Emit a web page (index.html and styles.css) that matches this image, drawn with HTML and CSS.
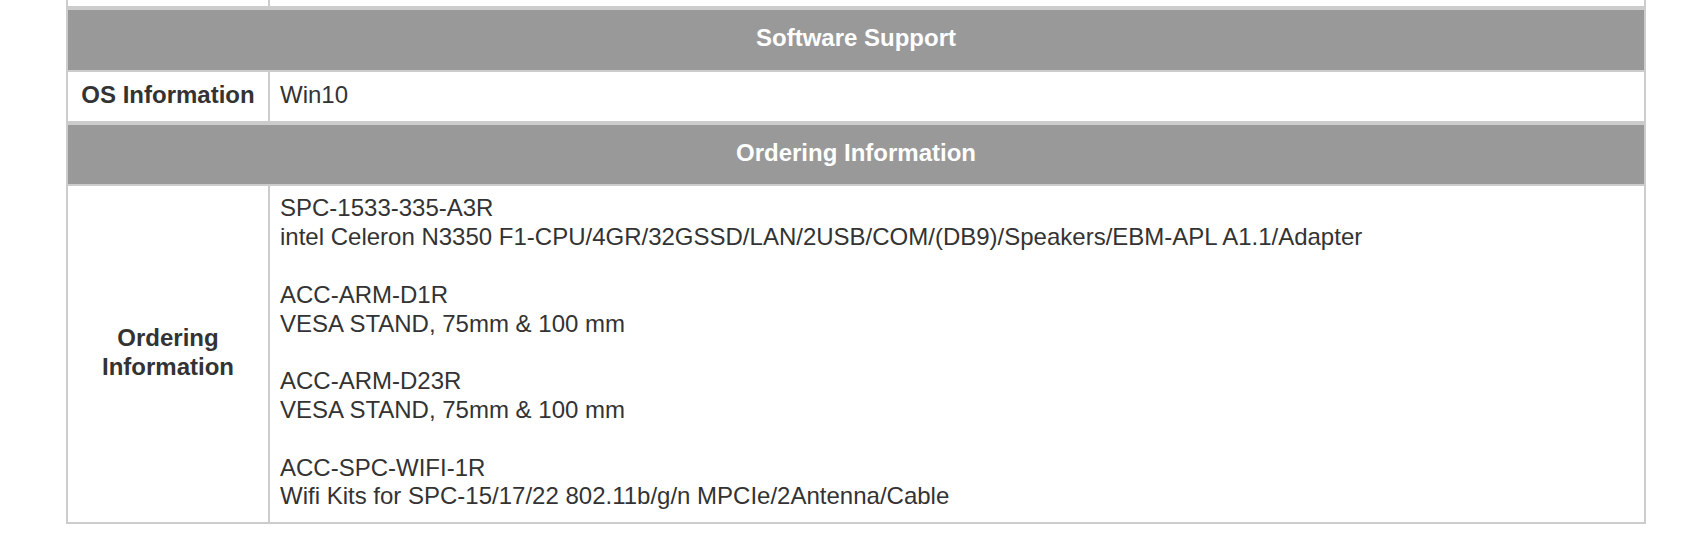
FILE: index.html
```html
<!DOCTYPE html>
<html>
<head>
<meta charset="utf-8">
<link rel="stylesheet" href="styles.css">
</head>
<body>
<table class="spec">
  <tr class="prev">
    <td class="label"></td>
    <td class="value"></td>
  </tr>
  <tr>
    <th class="section" colspan="2">Software Support</th>
  </tr>
  <tr>
    <td class="label">OS Information</td>
    <td class="value">Win10</td>
  </tr>
  <tr>
    <th class="section" colspan="2">Ordering Information</th>
  </tr>
  <tr>
    <td class="label">Ordering Information</td>
    <td class="value order">SPC-1533-335-A3R<br>intel Celeron N3350 F1-CPU/4GR/32GSSD/LAN/2USB/COM/(DB9)/Speakers/EBM-APL A1.1/Adapter<br><br>ACC-ARM-D1R<br>VESA STAND, 75mm &amp; 100 mm<br><br>ACC-ARM-D23R<br>VESA STAND, 75mm &amp; 100 mm<br><br>ACC-SPC-WIFI-1R<br>Wifi Kits for SPC-15/17/22 802.11b/g/n MPCIe/2Antenna/Cable</td>
  </tr>
</table>
</body>
</html>
```

FILE: styles.css
```css
html, body {
  margin: 0;
  padding: 0;
  background: #fff;
}

.spec {
  margin-left: 66px;
  width: 1580px;
  border-collapse: separate;
  border-spacing: 0;
  border: 1px solid #cccccc;
  border-top: 0;
  font-family: "Liberation Sans", Arial, Helvetica, sans-serif;
  font-size: 24px;
  line-height: 28.8px;
  color: #333333;
  table-layout: fixed;
}

.spec td,
.spec th {
  border: 1px solid #cccccc;
  padding: 9px 10px 11px;
}

.spec .label {
  width: 180px;
  font-weight: bold;
  text-align: center;
  vertical-align: middle;
}

.spec .value {
  text-align: left;
  vertical-align: top;
}

.spec .prev td {
  border-top: 0;
  padding: 0;
  height: 6px;
  line-height: 6px;
}

.spec .prev .label {
  width: 200px;
}

.spec .section {
  background: #999999;
  color: #ffffff;
  font-weight: bold;
  text-align: center;
  border-top-width: 3px;
  padding: 14px 10px 17px;
}

.spec .order {
  padding-top: 8px;
  padding-bottom: 11px;
}
```
